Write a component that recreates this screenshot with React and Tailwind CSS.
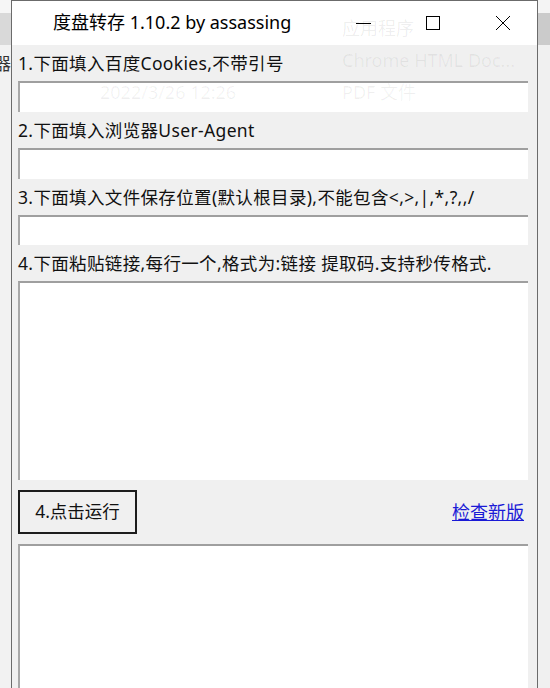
import React from "react";

const FONT = { fontFamily: '"Noto Sans", "Noto Sans CJK SC", sans-serif' };

function Field({ h }) {
  return (
    <div
      className={`bg-white border-t-2 border-l-2 border-t-[#9f9f9f] border-l-[#a8a8a8] mr-[9px] ${h}`}
    />
  );
}

function Label({ children }) {
  return (
    <div className="h-[36px] flex items-center pt-[2px] text-[17.5px] tracking-[0.35px] text-[#111] whitespace-nowrap leading-none">
      {children}
    </div>
  );
}

export default function App() {
  return (
    <div
      className="relative w-[550px] h-[688px] overflow-hidden bg-[#f3f3f3] flex"
      style={FONT}
    >
      {/* left strip of background window */}
      <div className="w-[11px] flex flex-col shrink-0">
        <div className="h-[13px] bg-[#f6f6f6]" />
        <div className="h-[32px] bg-[#d9d9d9]" />
        <div className="flex-1 bg-[#f2f2f2]" />
      </div>

      {/* window */}
      <div className="w-[527px] shrink-0 flex flex-col border-l border-r border-t border-[#6b6b6b]">
        {/* title bar */}
        <div className="h-[44px] bg-white flex items-center shrink-0">
          <div className="pl-[41px] text-[18px] text-black leading-none pb-[2px] whitespace-nowrap">
            度盘转存 1.10.2 by assassing
          </div>
          <div className="flex-1" />
          <svg width="182" height="44" viewBox="0 0 182 44" className="shrink-0">
            <line x1="1" y1="22.5" x2="16" y2="22.5" stroke="#000" strokeWidth="1" />
            <rect x="71.5" y="15.5" width="13" height="13" fill="none" stroke="#000" strokeWidth="1" />
            <line x1="141" y1="15" x2="155" y2="29" stroke="#000" strokeWidth="1" />
            <line x1="155" y1="15" x2="141" y2="29" stroke="#000" strokeWidth="1" />
          </svg>
        </div>

        {/* content */}
        <div className="flex-1 bg-[#f0f0f0] pl-[6px] flex flex-col">
          <Label>1.下面填入百度Cookies,不带引号</Label>
          <Field h="h-[31px]" />
          <Label>2.下面填入浏览器User-Agent</Label>
          <Field h="h-[31px]" />
          <Label>3.下面填入文件保存位置(默认根目录),不能包含&lt;,&gt;,|,*,?,,/</Label>
          <Field h="h-[30px]" />
          <Label>4.下面粘贴链接,每行一个,格式为:链接 提取码.支持秒传格式.</Label>
          <Field h="h-[199px]" />
          <div className="h-[64px] flex items-center justify-between mr-[13px]">
            <button className="w-[119px] h-[44px] border-2 border-[#1c1c1c] bg-[#f0f0f0] text-[17.5px] text-[#111] leading-none flex items-center justify-center">
              4.点击运行
            </button>
            <a className="text-[18px] text-[#1a1ad6] underline leading-none cursor-pointer">
              检查新版
            </a>
          </div>
          <div className="flex-1 bg-white border-t-2 border-l-2 border-t-[#9f9f9f] border-l-[#a8a8a8] mr-[9px]" />
        </div>
      </div>

      {/* right strip */}
      <div className="flex-1 flex flex-col">
        <div className="h-[13px] bg-[#f4f4f4]" />
        <div className="h-[32px] bg-[#cbcbcb]" />
        <div className="flex-1 bg-[#f0f0f0]" />
      </div>

      {/* ghost text showing through from the window behind */}
      <div className="absolute left-[-6px] top-[55px] text-[17px] text-[#333] leading-none pointer-events-none">
        器
      </div>
      <div className="absolute left-[342px] top-[19px] text-[18px] text-black/[0.07] leading-none pointer-events-none whitespace-nowrap">
        应用程序
      </div>
      <div className="absolute left-[342px] top-[51px] text-[18px] text-black/[0.06] leading-none pointer-events-none whitespace-nowrap">
        Chrome HTML Doc...
      </div>
      <div className="absolute left-[342px] top-[83px] text-[18px] text-black/[0.06] leading-none pointer-events-none whitespace-nowrap">
        PDF 文件
      </div>
      <div className="absolute left-[100px] top-[83px] text-[18px] text-black/[0.06] leading-none pointer-events-none whitespace-nowrap">
        2022/3/26 12:26
      </div>
    </div>
  );
}
